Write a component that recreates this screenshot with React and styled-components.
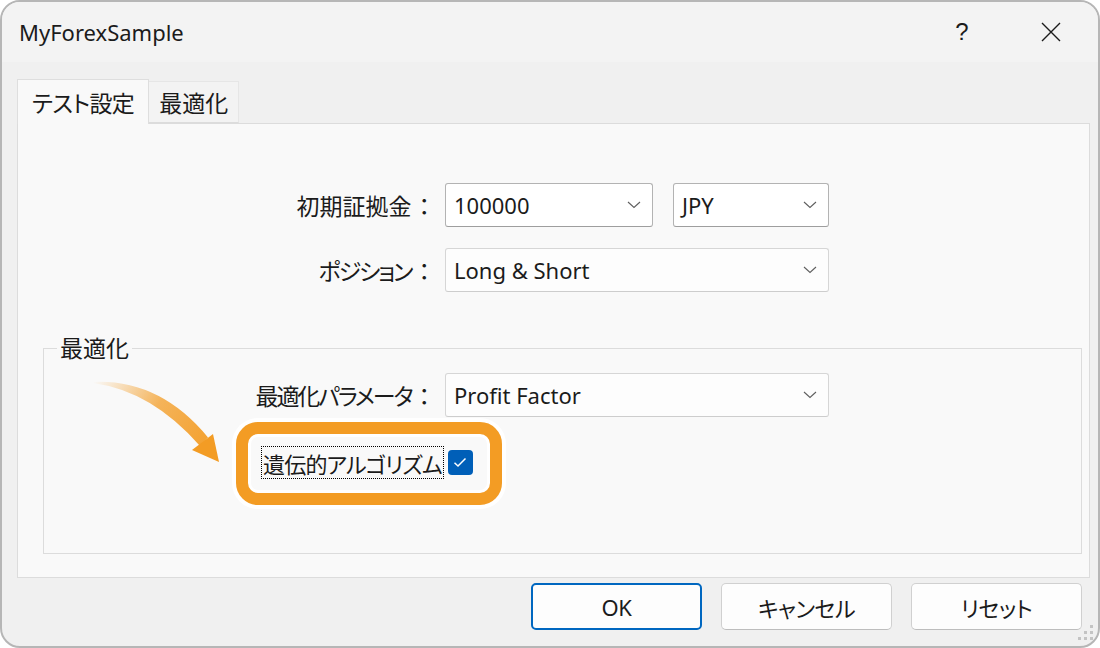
import React from "react";
import styled, { createGlobalStyle } from "styled-components";

const GlobalStyle = createGlobalStyle`
  html, body {
    margin: 0;
    padding: 0;
    background: #ffffff;
  }
  body {
    font-family: "Noto Sans", "Noto Sans CJK JP", sans-serif;
    font-feature-settings: "palt";
    color: #1b1b1b;
  }
  * {
    box-sizing: border-box;
  }
`;

const Chevron = () => (
  <svg width="14" height="8" viewBox="0 0 14 8">
    <path d="M1 1 L7 6.5 L13 1" fill="none" stroke="#5f5f5f" strokeWidth="1.1" />
  </svg>
);

const CloseIcon = () => (
  <svg width="20" height="20" viewBox="0 0 20 20">
    <path d="M1 1 L19 19 M19 1 L1 19" stroke="#1b1b1b" strokeWidth="1.4" />
  </svg>
);

const CheckIcon = () => (
  <svg width="14" height="11" viewBox="0 0 14 11">
    <path d="M1.5 5.8 L5 9 L12.5 1.5" fill="none" stroke="#ffffff" strokeWidth="1.5" />
  </svg>
);

const Grip = () => (
  <svg width="16" height="16" viewBox="0 0 16 16">
    {[
      [12, 0],
      [6, 6],
      [12, 6],
      [0, 12],
      [6, 12],
      [12, 12],
    ].map(([x, y]) => (
      <rect key={`${x}-${y}`} x={x} y={y} width="3" height="3" fill="#c4c4c4" />
    ))}
  </svg>
);

const Combo = ({ value, width, strong }) => (
  <ComboBox $width={width} $strong={strong}>
    <span>{value}</span>
    <Chevron />
  </ComboBox>
);

export default function App() {
  return (
    <>
      <GlobalStyle />
      <Window>
        <TitleBar>
          <Title>MyForexSample</Title>
          <Caption>
            <CaptionButton>?</CaptionButton>
            <CaptionButton>
              <CloseIcon />
            </CaptionButton>
          </Caption>
        </TitleBar>

        <Content>
          <Tabs>
            <Tab $active>テスト設定</Tab>
            <Tab>最適化</Tab>
          </Tabs>

          <Panel>
            <Form $labelWidth={417}>
              <Label>
                初期証拠金<Colon>：</Colon>
              </Label>
              <Pair>
                <Combo value="100000" width={208} strong />
                <Combo value="JPY" width={156} strong />
              </Pair>
              <Label $kana>
                ポジション<Colon>：</Colon>
              </Label>
              <Combo value="Long & Short" width={384} />
            </Form>

            <Group>
              <Legend>最適化</Legend>
              <Form $labelWidth={391}>
                <Label $kana>
                  最適化パラメータ<Colon>：</Colon>
                </Label>
                <Combo value="Profit Factor" width={384} />
              </Form>
              <CheckRow>
                <FocusText>遺伝的アルゴリズム</FocusText>
                <CheckBox>
                  <CheckIcon />
                </CheckBox>
              </CheckRow>
            </Group>
          </Panel>

          <Buttons>
            <Button $default>OK</Button>
            <Button>キャンセル</Button>
            <Button>リセット</Button>
          </Buttons>
        </Content>

        <Highlight />
        <Arrow viewBox="0 0 1100 648" width="1100" height="648">
          <defs>
            <linearGradient id="arrowFade" x1="93" y1="382" x2="219" y2="462" gradientUnits="userSpaceOnUse">
              <stop offset="0" stopColor="#f39c24" stopOpacity="0" />
              <stop offset="0.45" stopColor="#f39c24" stopOpacity="0.75" />
              <stop offset="1" stopColor="#f39c24" />
            </linearGradient>
          </defs>
          <path
            d="M93 382 Q160 379 208 437.5 L200 446 Q152 391 93 383 Z"
            fill="url(#arrowFade)"
          />
          <path d="M192 450 L213 434 L219 462 Z" fill="#f39c24" />
        </Arrow>

        <GripCorner>
          <Grip />
        </GripCorner>
      </Window>
    </>
  );
}

const Window = styled.div`
  position: relative;
  width: 1100px;
  height: 648px;
  border: 2px solid #b6b6b6;
  border-radius: 20px;
  background: #f0f0f0;
  overflow: hidden;
  display: flex;
  flex-direction: column;
`;

const TitleBar = styled.div`
  height: 60px;
  flex-shrink: 0;
  display: flex;
  align-items: center;
  justify-content: space-between;
  padding-left: 17px;
  background: #f3f3f3;
`;

const Title = styled.div`
  font-size: 22px;
`;

const Caption = styled.div`
  display: flex;
  align-items: center;
  gap: 43px;
  margin-right: 24px;
`;

const CaptionButton = styled.div`
  width: 46px;
  height: 40px;
  display: flex;
  align-items: center;
  justify-content: center;
  font-size: 24px;
  font-family: "Liberation Sans", sans-serif;
`;

const Content = styled.div`
  flex: 1;
  display: flex;
  flex-direction: column;
  padding: 17px 8px 0 15px;
`;

const Tabs = styled.div`
  display: flex;
  align-items: flex-end;
  height: 45px;
  margin-bottom: -1px;
  position: relative;
  z-index: 1;
`;

const Tab = styled.div`
  height: ${(p) => (p.$active ? "45px" : "42px")};
  margin-bottom: ${(p) => (p.$active ? "0" : "1px")};
  padding: 0 ${(p) => (p.$active ? "14px" : "10px")};
  display: flex;
  align-items: center;
  font-size: 23px;
  letter-spacing: ${(p) => (p.$active ? "-0.6px" : "0")};
  background: ${(p) => (p.$active ? "#f9f9f9" : "#f3f3f3")};
  border: 1px solid ${(p) => (p.$active ? "#dedede" : "#e6e6e6")};
  border-bottom: ${(p) => (p.$active ? "none" : "1px solid #dcdcdc")};
  border-left: ${(p) => (p.$active ? "1px solid #dedede" : "none")};
`;

const Panel = styled.div`
  height: 455px;
  background: #f9f9f9;
  border: 1px solid #dcdcdc;
  padding-top: 59px;
`;

const Form = styled.div`
  display: grid;
  grid-template-columns: ${(p) => p.$labelWidth}px 384px;
  column-gap: 10px;
  row-gap: 21px;
  align-items: center;
`;

const Label = styled.div`
  font-size: 23px;
  text-align: right;
  padding-right: 5px;
  letter-spacing: ${(p) => (p.$kana ? "-2.1px" : "0")};
`;

const Colon = styled.span`
  margin-left: 7px;
  letter-spacing: 0;
`;

const Pair = styled.div`
  display: flex;
  gap: 20px;
`;

const ComboBox = styled.div`
  width: ${(p) => p.$width}px;
  height: 44px;
  display: flex;
  align-items: center;
  justify-content: space-between;
  padding: 0 11px 0 8px;
  font-size: 22px;
  background: ${(p) => (p.$strong ? "#ffffff" : "#fdfdfd")};
  border: 1px solid ${(p) => (p.$strong ? "#b3b3b3" : "#d6d6d6")};
  border-bottom-color: ${(p) => (p.$strong ? "#9e9e9e" : "#cdcdcd")};
  border-radius: 3px;

  span {
    padding-bottom: 1px;
  }
`;

const Group = styled.fieldset`
  margin: 42px 7px 0 25px;
  padding: 11px 0 0 0;
  height: 220px;
  border: 1px solid #dcdcdc;
  border-radius: 0;
`;

const Legend = styled.legend`
  margin-left: 13px;
  padding: 0 3px;
  font-size: 23px;
  line-height: 28px;
`;

const CheckRow = styled.div`
  display: flex;
  align-items: center;
  margin-top: 29px;
  padding-left: 217px;
`;

const FocusText = styled.div`
  height: 33px;
  display: flex;
  align-items: center;
  padding: 0 1px;
  font-size: 22px;
  letter-spacing: -0.8px;
  border: 1px dotted #000000;
`;

const CheckBox = styled.div`
  width: 25px;
  height: 25px;
  margin-left: 4px;
  border-radius: 4px;
  background: #005fb8;
  display: flex;
  align-items: center;
  justify-content: center;
`;

const Buttons = styled.div`
  display: flex;
  justify-content: flex-end;
  gap: 19px;
  margin-top: 5px;
  padding-right: 8px;
`;

const Button = styled.div`
  width: 171px;
  height: 47px;
  display: flex;
  align-items: center;
  justify-content: center;
  font-size: 22px;
  letter-spacing: -0.5px;
  background: #fdfdfd;
  border: ${(p) => (p.$default ? "2px solid #0067c0" : "1px solid #d0d0d0")};
  border-bottom-color: ${(p) => (p.$default ? "#0067c0" : "#bdbdbd")};
  border-radius: 5px;
`;

const Highlight = styled.div`
  position: absolute;
  left: 234px;
  top: 420px;
  width: 266px;
  height: 83px;
  border: 12px solid #f39c24;
  border-radius: 22px;
  box-shadow: 0 0 0 4px #ffffff, inset 0 0 0 3px #ffffff;
  pointer-events: none;
`;

const Arrow = styled.svg`
  position: absolute;
  left: -2px;
  top: -2px;
  pointer-events: none;
`;

const GripCorner = styled.div`
  position: absolute;
  right: 4px;
  bottom: 5px;
  line-height: 0;
`;
